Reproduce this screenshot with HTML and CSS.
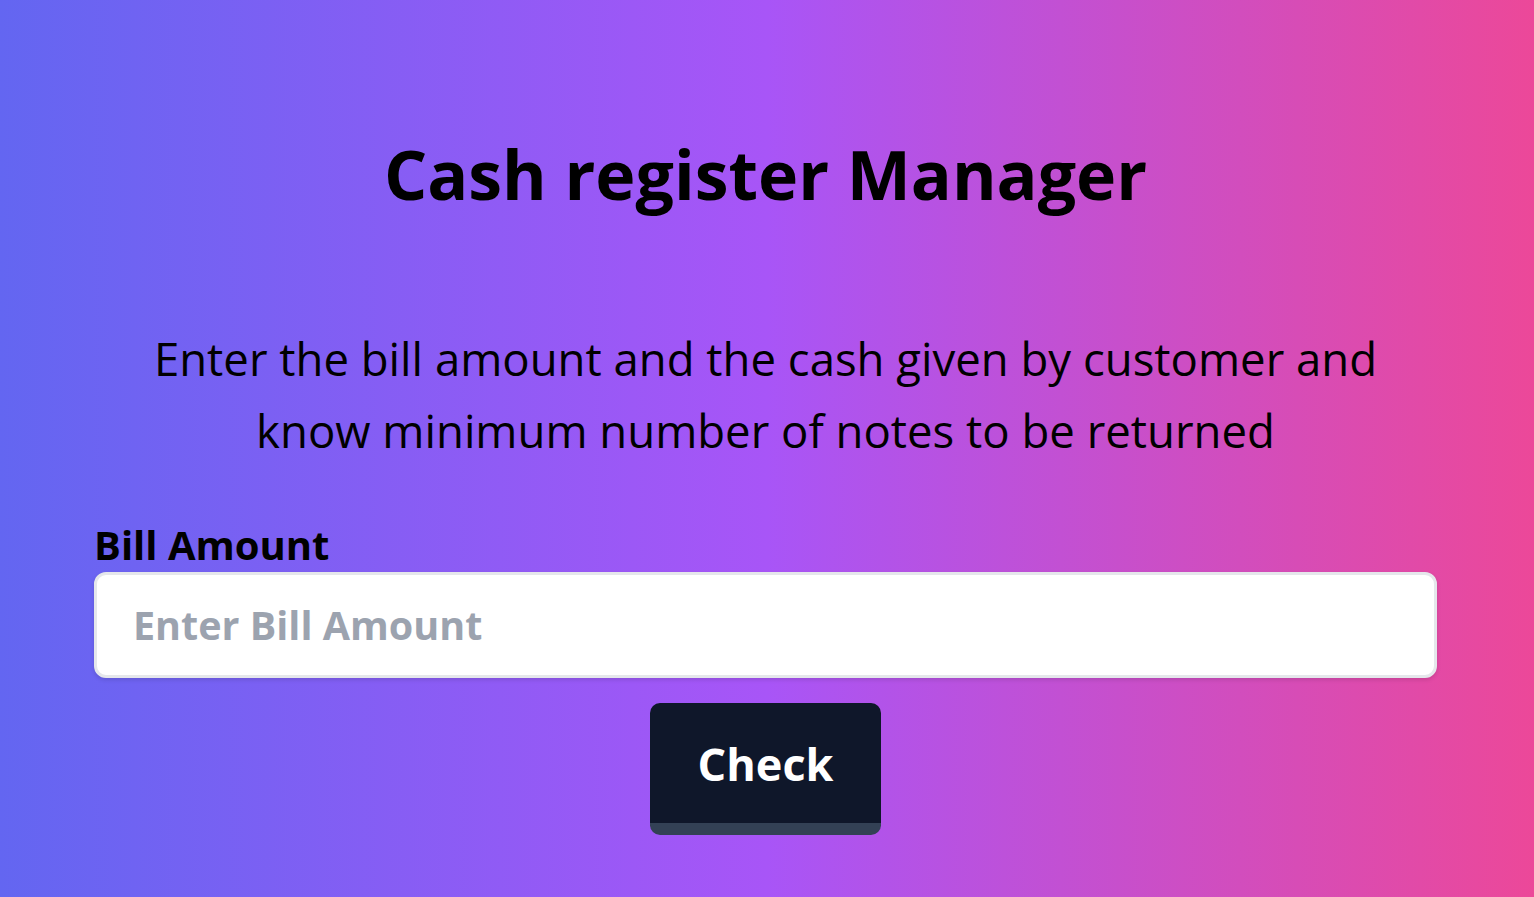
FILE: index.html
```html
<!DOCTYPE html>
<html lang="en">
<head>
<meta charset="utf-8">
<title>Cash register Manager</title>
<link rel="stylesheet" href="styles.css">
</head>
<body>
<main class="page">
  <h1 class="title">Cash register Manager</h1>
  <p class="intro">Enter the bill amount and the cash given by customer and know minimum number of notes to be returned</p>
  <form class="form">
    <label class="label" for="bill">Bill Amount</label>
    <input class="input" id="bill" type="number" placeholder="Enter Bill Amount">
    <button class="btn" type="button">Check</button>
  </form>
</main>
</body>
</html>
```

FILE: styles.css
```css
html, body {
  margin: 0;
  padding: 0;
  height: 100%;
}
body {
  background: linear-gradient(to right, #6366f1, #a855f7, #ec4899);
  font-family: "Open Sans", "Noto Sans", "DejaVu Sans", sans-serif;
  color: #000;
  overflow: hidden;
}
.page {
  display: flex;
  flex-direction: column;
  align-items: center;
  padding: 0 97px 0 94px;
}
.title {
  margin: 133px 0 0;
  font-size: 68px;
  line-height: 82px;
  font-weight: 700;
  text-align: center;
}
.intro {
  margin: 107px 0 0;
  max-width: 1270px;
  font-size: 45.5px;
  line-height: 72px;
  font-weight: 400;
  text-align: center;
}
.form {
  align-self: stretch;
  display: flex;
  flex-direction: column;
  align-items: center;
  margin-top: 52px;
}
.label {
  align-self: flex-start;
  font-size: 40px;
  line-height: 54px;
  font-weight: 700;
}
.input {
  align-self: stretch;
  box-sizing: border-box;
  height: 106px;
  border: 3px solid #e5e7eb;
  border-radius: 12px;
  background: #fff;
  padding: 0 36px;
  font-family: inherit;
  font-size: 39.5px;
  font-weight: 700;
  color: #111827;
  box-shadow: 0 2px 4px rgba(0,0,0,0.12);
  outline: none;
}
.input::placeholder {
  color: #9ca3af;
}
.btn {
  margin-top: 25px;
  width: 231px;
  height: 132px;
  box-sizing: border-box;
  border: none;
  border-bottom: 12px solid #334155;
  border-radius: 10px;
  background: #0f172a;
  color: #fff;
  font-family: inherit;
  font-size: 45px;
  font-weight: 700;
  cursor: pointer;
}
```
